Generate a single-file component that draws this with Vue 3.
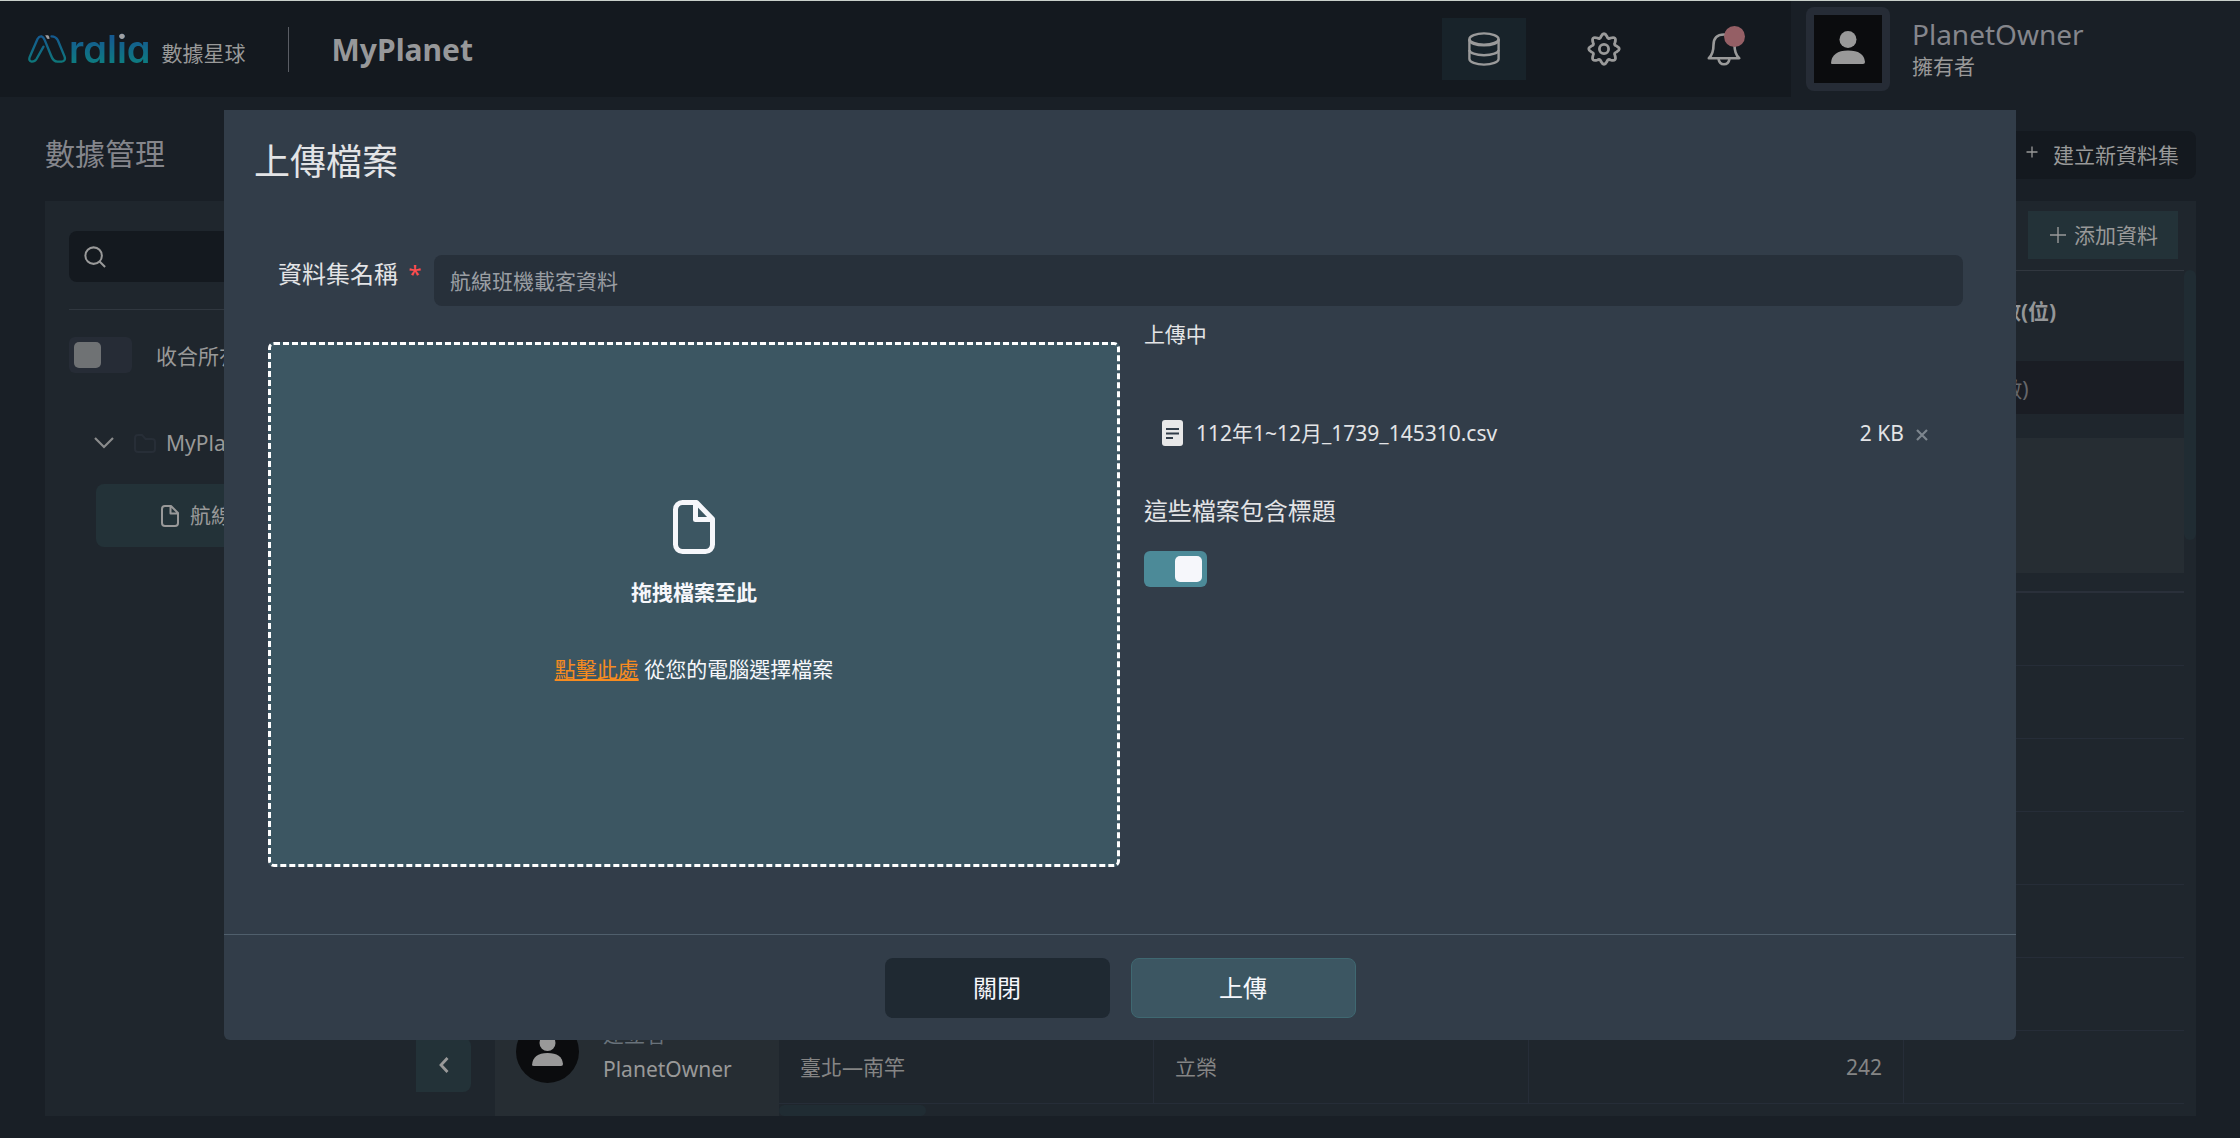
<script setup>
import { ref } from 'vue'

const columns = [
  { name: '', type: '', cls: 'col' },
  { name: '', type: '', cls: 'col' },
  { name: '', type: '', cls: 'col' },
  { name: '載客人數(位)', type: '數值(整數)', cls: 'col-last' },
]
const rows = [
  ['', '', '', ''],
  ['', '', '', ''],
  ['', '', '', ''],
  ['', '', '', ''],
  ['', '', '', ''],
  ['', '', '', ''],
  ['臺北—南竿', '立榮', '242', ''],
]

const datasetName = ref('航線班機載客資料')
const hasHeader = ref(true)
const collapseAll = ref(false)
const keyword = ref('')
</script>

<template>
  <div class="page">
    <header class="topbar">
      <div class="bar-main">
        <a class="logo" href="#">
          <svg class="logo-mark" viewBox="24 44 116 84" aria-hidden="true">
            <defs>
              <linearGradient id="mark" x1="0" y1="0" x2="0" y2="1">
                <stop offset="0" stop-color="#155a90" />
                <stop offset="1" stop-color="#0e767a" />
              </linearGradient>
            </defs>
            <path
              d="M70 79 L49 116 Q44 124 35 124 Q24 122 29 109 L52 56 Q57 47 64 48 Q70 50 74 60 L92 104 Q99 124 112 124 L124 124 Q138 122 133 108 L113 60 Q107 48 94 48"
              fill="none" stroke="url(#mark)" stroke-width="7" stroke-linecap="round" />
            <path d="M75 45 L84 45 Q88 48 88 56 L81 55 Z" fill="#a0a0a2" />
          </svg>
          <span class="logo-word">ralia</span>
          <span class="logo-sub">數據星球</span>
        </a>
        <div class="planet">MyPlanet</div>
        <nav class="nav">
          <button class="nav-btn active" aria-label="資料">
            <svg width="34" height="34" viewBox="0 0 34 34" fill="none" stroke="#9a9a9a" stroke-width="2.4">
              <ellipse cx="17" cy="7" rx="14.6" ry="5.6" />
              <path d="M2.4 7v20c0 3 6.500 5.600 14.600 5.600s14.600-2.600 14.600-5.600V7" />
              <path d="M2.4 8c0 3 6.500 5.400 14.600 5.400S31.600 11 31.600 8M2.400 18c0 3 6.500 5.200 14.600 5.200S31.600 21 31.600 18" />
            </svg>
          </button>
          <button class="nav-btn" aria-label="設定">
            <svg width="34" height="34" viewBox="0 0 34 34" fill="none" stroke="#9a9a9a" stroke-width="2.8" stroke-linejoin="round">
              <circle cx="17" cy="17" r="4.6" />
              <path
                d="M14 4.500 Q17 -1 20 4.500 Q21 7.500 23.500 6 Q30 4 28 10.500 Q26.500 13 29.500 14 Q35 17 29.500 20 Q26.500 21 28 23.500 Q30 30 23.500 28 Q21 26.500 20 29.500 Q17 35 14 29.500 Q13 26.500 10.500 28 Q4 30 6 23.500 Q7.500 21 4.500 20 Q-1 17 4.500 14 Q7.500 13 6 10.500 Q4 4 10.500 6 Q13 7.500 14 4.500 Z" />
            </svg>
          </button>
          <button class="nav-btn" aria-label="通知">
            <svg width="34" height="34" viewBox="0 0 34 34" fill="none" stroke="#9a9a9a" stroke-width="2.6" stroke-linejoin="round">
              <path d="M1.800 26.200 Q6.500 22 6.500 13 Q6.500 2.500 17 2.500 Q27.500 2.500 27.500 13 Q27.500 22 32.200 26.200 Z" />
              <path d="M11.500 27 Q12.500 32.300 17 32.300 Q21.500 32.300 22.500 27" />
            </svg>
            <span class="dot"></span>
          </button>
        </nav>
      </div>
      <div class="user">
        <span class="avatar-frame">
          <svg width="68" height="68" viewBox="0 0 68 68">
            <rect width="68" height="68" fill="#0b0c0e" />
            <circle cx="34" cy="24.500" r="8.500" fill="#999" />
            <path d="M17 48 Q18 35.500 34 35.500 Q50 35.500 51 47 Q51 49 49 49 L18 49 Q17 49 17 48 Z" fill="#999" />
          </svg>
        </span>
        <div>
          <div class="user-name">PlanetOwner</div>
          <div class="user-role">擁有者</div>
        </div>
      </div>
    </header>

    <div class="title-row">
      <h1>數據管理</h1>
      <button class="create-btn">
        <svg class="small-plus" width="12" height="12" viewBox="0 0 12 12" stroke="#999" stroke-width="1.300"><path d="M6 0.500v11M0.500 6h11" /></svg>
        建立新資料集
      </button>
    </div>

    <main class="panel">
      <aside class="sidebar">
        <label class="search">
          <svg width="22" height="22" viewBox="0 0 24 24" fill="none" stroke="#999" stroke-width="2.200"><circle cx="10.500" cy="10.500" r="9" /><path d="M17 17l6 6" /></svg>
          <input v-model="keyword" type="text" aria-label="搜尋" />
        </label>
        <label class="collapse">
          <input v-model="collapseAll" class="switch" type="checkbox" />
          <span>收合所有</span>
        </label>
        <div class="tree-node">
          <svg width="20" height="12" viewBox="0 0 20 12" fill="none" stroke="#8a8b8c" stroke-width="2.200"><path d="M1 1l9 9 9-9" /></svg>
          <svg class="folder" width="22" height="19" viewBox="0 0 22 19" fill="none" stroke="#272e37" stroke-width="2"><path d="M1 4a3 3 0 0 1 3-3h4l3.500 4H18a3 3 0 0 1 3 3v7a3 3 0 0 1-3 3H4a3 3 0 0 1-3-3Z" /></svg>
          <span>MyPlanet</span>
        </div>
        <a class="tree-leaf" href="#">
          <svg width="18" height="22" viewBox="0 0 18 22" fill="none" stroke="#999" stroke-width="2" stroke-linejoin="round"><path d="M10 1H4a3 3 0 0 0-3 3v14a3 3 0 0 0 3 3h10a3 3 0 0 0 3-3V8ZM9.500 1v7.500H17" /></svg>
          <span>航線班機</span>
        </a>
      </aside>

      <div class="rail">
        <button class="fold-btn" aria-label="收合">
          <svg width="10" height="16" viewBox="0 0 10 16" fill="none" stroke="#999" stroke-width="2.800"><path d="M8.500 1L2 8l6.500 7" /></svg>
        </button>
      </div>

      <section class="content">
        <div class="toolbar">
          <button class="add-btn">
            <svg width="16" height="16" viewBox="0 0 16 16" stroke="#999" stroke-width="1.400"><path d="M8 0v16M0 8h16" /></svg>
            添加資料
          </button>
        </div>
        <div class="data">
          <div class="creator">
            <svg width="63" height="63" viewBox="0 0 63 63">
              <circle cx="31.500" cy="31.500" r="31.500" fill="#0b0c0e" />
              <circle cx="31.500" cy="23" r="8" fill="#999" />
              <path d="M16 45 Q17 33 31.500 33 Q46 33 47 44 Q47 46 45 46 L18 46 Q16 46 16 45 Z" fill="#999" />
            </svg>
            <div>
              <div class="creator-label">建立者</div>
              <div class="creator-name">PlanetOwner</div>
            </div>
          </div>
          <div class="grid-area">
            <table>
              <thead>
                <tr class="names">
                  <th v-for="(c, i) in columns" :key="i" :class="c.cls">{{ c.name }}</th>
                </tr>
                <tr class="types">
                  <td v-for="(c, i) in columns" :key="i">{{ c.type }}</td>
                </tr>
                <tr class="charts">
                  <td v-for="(c, i) in columns" :key="i"><div class="chart"></div></td>
                </tr>
              </thead>
              <tbody>
                <tr v-for="(r, i) in rows" :key="i">
                  <td v-for="(v, j) in r" :key="j" :class="{ num: j === 2 }">{{ v }}</td>
                </tr>
              </tbody>
            </table>
            <div class="h-scroll"></div>
          </div>
          <div class="v-track"><div class="v-scroll"></div></div>
        </div>
      </section>
    </main>

    <div class="overlay">
      <section class="modal" role="dialog" aria-labelledby="dlg-title">
        <h2 id="dlg-title">上傳檔案</h2>
        <div class="modal-body">
          <div class="field">
            <label for="ds-name">資料集名稱 <span class="req">*</span></label>
            <input id="ds-name" v-model="datasetName" type="text" />
          </div>
          <div class="upload">
            <div class="dropzone">
              <svg width="42" height="54" viewBox="0 0 42 54" fill="none" stroke="#f6f7fb" stroke-width="5" stroke-linejoin="round"><path d="M23.500 2.500H9.500a7 7 0 0 0-7 7v35a7 7 0 0 0 7 7h23a7 7 0 0 0 7-7V19ZM22.500 2.500V19.500H39.500" /></svg>
              <strong>拖拽檔案至此</strong>
              <p><a href="#">點擊此處</a> 從您的電腦選擇檔案</p>
            </div>
            <div class="files">
              <div class="status">上傳中</div>
              <div class="file">
                <svg width="21" height="26" viewBox="0 0 21 26"><rect width="21" height="26" rx="3" fill="#e8e8e8" /><path d="M4 9h13M4 13.500h13M4 18h7" stroke="#323d49" stroke-width="2.200" /></svg>
                <span class="file-name">112年1~12月_1739_145310.csv</span>
                <span class="file-size">2 KB</span>
                <button class="remove" aria-label="移除">
                  <svg width="12" height="12" viewBox="0 0 12 12" stroke="#7d868e" stroke-width="2.200"><path d="M1 1l10 10M11 1L1 11" /></svg>
                </button>
              </div>
              <label class="header-label" for="has-header">這些檔案包含標題</label>
              <input id="has-header" v-model="hasHeader" class="switch" type="checkbox" />
            </div>
          </div>
        </div>
        <footer>
          <button class="btn-close">關閉</button>
          <button class="btn-upload">上傳</button>
        </footer>
      </section>
    </div>
  </div>
</template>

<style>
body {
  background: #191f26;
}
</style>

<style scoped>
.page,
.page * {
  box-sizing: border-box;
}
.page {
  min-height: 100vh;
  overflow: hidden;
  background: #191f26;
  color: #999;
  font: 21px/30px "Noto Sans", "Noto Sans CJK TC", sans-serif;
}
button,
input {
  font: inherit;
  color: inherit;
  border: 0;
  margin: 0;
  padding: 0;
}
button {
  cursor: pointer;
}
svg {
  display: block;
  flex: none;
}
a {
  color: inherit;
  text-decoration: none;
}

.topbar {
  display: flex;
  height: 97px;
  border-top: 1px solid #c9d0ca;
}
.bar-main {
  flex: 1;
  display: flex;
  align-items: center;
  padding: 0 25px 0 28px;
  background: #14191f;
}
.logo {
  display: flex;
  align-items: center;
  padding-right: 42px;
  height: 45px;
  border-right: 1px solid #5a5d64;
}
.logo-mark {
  width: 39px;
  height: 28px;
}
.logo-word {
  margin-left: 2px;
  font: 600 38px/38px Inter, sans-serif;
  font-feature-settings: "cv11";
  color: transparent;
  background:
    linear-gradient(#a0a0a2, #a0a0a2) 49px 0 / 10px 12px no-repeat,
    linear-gradient(#155a90 20%, #0e7a80 85%);
  -webkit-background-clip: text;
  background-clip: text;
}
.logo-sub {
  margin: 8px 0 0 11px;
}
.planet {
  margin: 2px 0 0 43px;
  font-size: 30px;
  font-weight: 700;
  color: #97989a;
}
.nav {
  margin-left: auto;
  display: flex;
  gap: 36px;
}
.nav-btn {
  position: relative;
  display: flex;
  align-items: center;
  justify-content: center;
  width: 84px;
  height: 62px;
  background: none;
}
.nav-btn.active {
  background: #18232a;
}
.dot {
  position: absolute;
  top: 8px;
  right: 21px;
  width: 21px;
  height: 21px;
  border-radius: 50%;
  background: #955f65;
}
.user {
  width: 449px;
  display: flex;
  align-items: center;
  gap: 22px;
  padding-left: 15px;
}
.avatar-frame {
  padding: 8px;
  border-radius: 8px;
  background: #262c36;
}
.user-name {
  font-size: 28px;
  line-height: 36px;
  color: #85868c;
}
.user-role {
  padding-bottom: 2px;
  line-height: 28px;
}

.title-row {
  display: flex;
  align-items: center;
  justify-content: space-between;
  padding: 34px 44px 22px 45px;
}
h1 {
  margin: 0 0 2px;
  font-size: 30px;
  line-height: 40px;
  font-weight: 400;
  color: #85868c;
}
.create-btn {
  display: flex;
  align-items: center;
  gap: 15px;
  height: 48px;
  padding: 0 17px;
  border-radius: 8px;
  background: #14191f;
}
.small-plus {
  margin-bottom: 6px;
}

.panel {
  display: flex;
  margin: 0 44px 22px 45px;
  background: #1f262d;
}
.sidebar {
  width: 371px;
  padding: 30px 24px;
}
.search {
  display: flex;
  align-items: center;
  gap: 12px;
  height: 51px;
  padding: 0 15px;
  border-radius: 8px;
  background: #14191f;
}
.search input {
  flex: 1;
  min-width: 0;
  background: none;
  outline: none;
}
.collapse {
  display: flex;
  align-items: center;
  gap: 24px;
  margin-top: 27px;
  padding-top: 27px;
  border-top: 1px solid #30373f;
}
.collapse span {
  padding-top: 2px;
}
.switch {
  appearance: none;
  display: flex;
  align-items: center;
  width: 63px;
  height: 36px;
  padding: 0 5px;
  border-radius: 6px;
  background: #262c36;
}
.switch::before {
  content: "";
  width: 27px;
  height: 26px;
  border-radius: 5px;
  background: #6f7274;
}
.switch:checked {
  justify-content: flex-end;
  background: #4c8a98;
}
.switch:checked::before {
  background: #f6f7fb;
}
.tree-node {
  display: flex;
  align-items: center;
  margin-top: 55px;
  padding-left: 25px;
}
.folder {
  margin: 0 10px 0 20px;
}
.tree-leaf {
  display: flex;
  align-items: center;
  gap: 11px;
  height: 63px;
  margin: 26px 0 0 27px;
  padding-left: 65px;
  border-radius: 8px;
  background: #233238;
}
.tree-leaf span {
  padding-bottom: 2px;
}
.rail {
  width: 79px;
  display: flex;
  align-items: flex-end;
  padding-bottom: 24px;
}
.fold-btn {
  display: flex;
  align-items: center;
  justify-content: center;
  width: 55px;
  height: 54px;
  border-radius: 0 8px 8px 0;
  background: #233238;
}
.content {
  flex: 1;
  min-width: 0;
  display: flex;
  flex-direction: column;
}
.toolbar {
  display: flex;
  justify-content: flex-end;
  padding: 10px 18px 11px;
}
.add-btn {
  display: flex;
  align-items: center;
  gap: 8px;
  height: 48px;
  padding: 0 20px 0 22px;
  background: #233238;
}
.data {
  flex: 1;
  display: flex;
}
.creator {
  width: 284px;
  display: flex;
  align-items: flex-end;
  gap: 24px;
  padding: 0 0 27px 21px;
  background: #262d33;
}
.creator svg {
  margin-bottom: 6px;
}
.creator-label {
  color: #69727a;
}
.creator-name {
  line-height: 40px;
}
.grid-area {
  flex: 1;
  min-width: 0;
  border-top: 1px solid #31373f;
}
table {
  width: 100%;
  table-layout: fixed;
  border-spacing: 0;
  line-height: 30px;
}
th,
td {
  text-align: left;
  white-space: nowrap;
}
.col {
  width: 375px;
}
.names th {
  height: 90px;
  padding: 0 33px 10px;
  font-weight: 700;
  color: #949698;
}
.types td {
  height: 53px;
  padding: 2px 28px 0;
  background: #1a1d24;
  color: #66676b;
}
.charts td {
  height: 179px;
  padding: 24px 0 18px;
  border-bottom: 2px solid #2a303a;
}
.chart {
  height: 135px;
  background: #262d33;
}
tbody td {
  height: 73px;
  padding: 0 21px;
  border-bottom: 1px solid #262d38;
  border-right: 1px solid #262d38;
  color: #858585;
}
tbody td:last-child {
  border-right: 0;
}
tbody .num {
  text-align: right;
}
.h-scroll {
  width: 147px;
  height: 11px;
  margin-top: 1px;
  border-radius: 6px;
  background: #202c33;
}
.v-track {
  width: 12px;
}
.v-scroll {
  height: 270px;
  border-radius: 6px;
  background: #202c33;
}

.overlay {
  position: fixed;
  inset: 0;
  display: flex;
  justify-content: center;
  align-items: flex-start;
  padding-top: 110px;
}
.modal {
  width: 80%;
  border-radius: 0 0 6px 6px;
  background: #323d49;
  color: #e3e4e6;
}
h2 {
  margin: 0;
  padding: 28px 30px 0;
  font-size: 36px;
  line-height: 48px;
  font-weight: 400;
}
.modal-body {
  padding: 69px 53px 67px 44px;
}
.field {
  display: flex;
  align-items: flex-start;
}
.field label {
  width: 166px;
  padding: 1px 0 0 10px;
  font-size: 24px;
  line-height: 36px;
}
.req {
  margin-left: 4px;
  color: #ff4d4f;
}
.field input {
  flex: 1;
  height: 51px;
  padding: 0 16px 2px;
  border-radius: 8px;
  background: #27303a;
  color: #9a9ea3;
}
.upload {
  display: grid;
  grid-template-columns: 52fr 50fr;
  gap: 24px;
  margin-top: 12px;
}
.dropzone {
  display: flex;
  flex-direction: column;
  align-items: center;
  height: 525px;
  margin-top: 24px;
  padding-top: 155px;
  border: 3px dashed #fff;
  border-radius: 6px;
  background: #3c5662;
  color: #f6f7fb;
}
.dropzone strong {
  margin-top: 23px;
}
.dropzone p {
  margin: 47px 0 0;
}
.dropzone a {
  color: #f68b1f;
  text-decoration: underline;
}
.status {
  padding-top: 1px;
}
.file {
  display: flex;
  align-items: center;
  margin-top: 69px;
  padding: 0 35px 0 18px;
}
.file-name {
  flex: 1;
  margin-left: 13px;
}
.remove {
  margin: 4px 0 0 12px;
  background: none;
}
.header-label {
  display: block;
  margin: 45px 0 22px;
  font-size: 24px;
  line-height: 36px;
}
footer {
  display: flex;
  justify-content: center;
  gap: 21px;
  padding: 23px 0 22px;
  border-top: 1px solid #505f6c;
}
footer button {
  width: 225px;
  height: 60px;
  border-radius: 8px;
  font-size: 24px;
  color: #f6f7fb;
}
.btn-close {
  background: #1f2932;
}
.btn-upload {
  background: #3c5662;
  border: 1px solid #3f6871;
}
</style>
